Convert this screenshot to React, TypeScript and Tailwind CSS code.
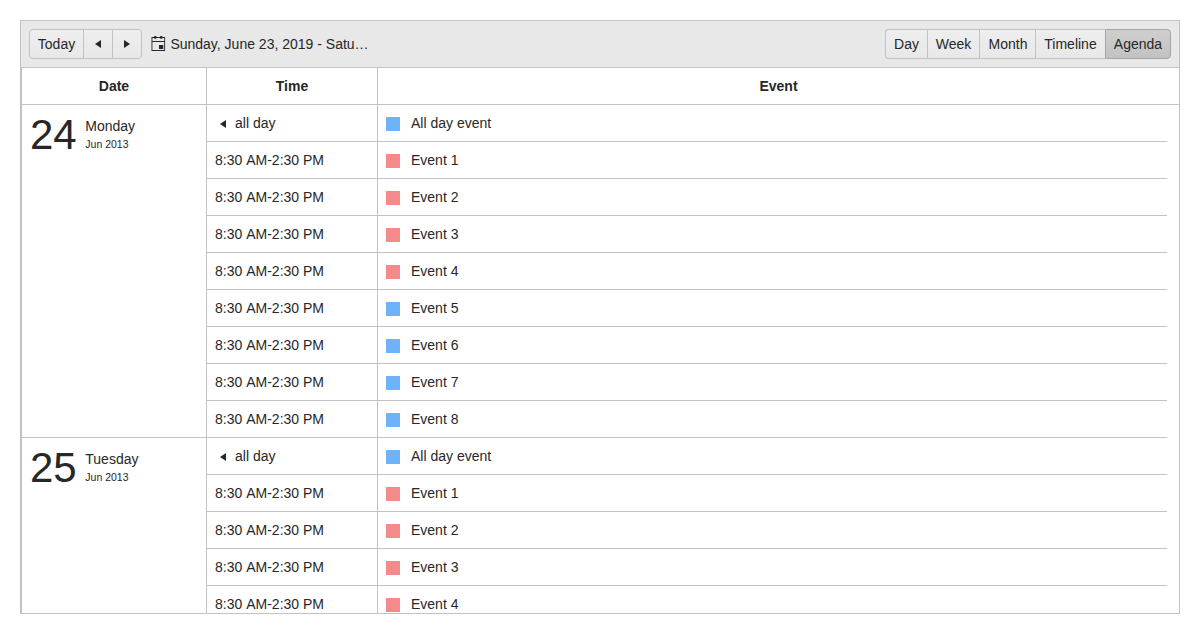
type Row = { time: [string, string]; title: string; blue: boolean; allDay?: boolean };

const buildRows = (count: number): Row[] => [
  { time: ['all ', 'day'], title: 'All day event', blue: true, allDay: true },
  ...Array.from({ length: count }, (_, i): Row => ({
    time: ['8:30 ', 'AM-2:30 PM'],
    title: `Event ${i + 1}`,
    blue: i >= 4,
  })),
];

const days = [
  { day: '24', weekday: 'Monday', month: 'Jun 2013', rows: buildRows(8) },
  { day: '25', weekday: 'Tuesday', month: 'Jun 2013', rows: buildRows(4) },
];

const views = [
  { label: 'Day', width: 'w-[42px] rounded-l' },
  { label: 'Week', width: 'w-[52px]' },
  { label: 'Month', width: 'w-[56px] pl-px' },
  { label: 'Timeline', width: 'w-[70px]' },
];

function ArrowLeft() {
  return (
    <svg width="6" height="8" viewBox="0 0 6 8" className="block shrink-0">
      <path d="M6 0v8L0 4z" fill="currentColor" />
    </svg>
  );
}

function ArrowRight() {
  return (
    <svg width="6" height="8" viewBox="0 0 6 8" className="block shrink-0">
      <path d="M0 0v8l6-4z" fill="currentColor" />
    </svg>
  );
}

function CalendarIcon() {
  return (
    <svg width="15" height="16" viewBox="0 0 15 16" className="block shrink-0">
      <path d="M0.5 1h13.6v14H0.5zM1.4 2v3h11.8V2zM1.4 6v8h11.8V6z" fill="currentColor" fillRule="evenodd" />
      <path d="M3.2 0.1h2.1v2.7H3.2zM9.2 0.1h2.1v2.7H9.2zM8 9h4.3v4H8z" fill="currentColor" />
    </svg>
  );
}

function Toolbar() {
  return (
    <div className="flex h-[47px] shrink-0 items-center border-b border-[#c2c2c2] bg-[#e8e8e8] px-2">
      <div className="flex h-[30px] overflow-hidden rounded border border-[#c2c2c2] bg-linear-to-b from-[#eeeeee] to-[#e8e8e8]">
        <button className="w-[53px] text-center">Today</button>
        <button className="flex w-[29px] items-center justify-center border-l border-[#c2c2c2]">
          <ArrowLeft />
        </button>
        <button className="flex w-[29px] items-center justify-center border-l border-[#c2c2c2]">
          <ArrowRight />
        </button>
      </div>
      <div className="ml-[9px] flex items-center gap-[4.4px]">
        <CalendarIcon />
        <span>Sunday, June 23, 2019 - Satu…</span>
      </div>
      <div className="ml-auto flex h-[30px]">
        {views.map((v) => (
          <button
            key={v.label}
            className={`${v.width} border-y border-l border-[#c2c2c2] bg-linear-to-b from-[#eeeeee] to-[#e8e8e8] text-center`}
          >
            {v.label}
          </button>
        ))}
        <button className="w-[66px] rounded-r border border-[#a5a5a5] bg-linear-to-b from-[#cfcfcf] to-[#c2c2c2] text-center">
          Agenda
        </button>
      </div>
    </div>
  );
}

export default function App() {
  return (
    <div className="h-[634px] overflow-hidden bg-white p-5 font-['Liberation_Sans',Arial,sans-serif] text-[14px] leading-5 text-[#272727]">
      <div className="flex h-[594px] flex-col overflow-hidden border border-[#c2c2c2]">
        <Toolbar />
        <div className="flex min-h-0 grow flex-col overflow-hidden border-l border-[#c2c2c2]">
          <div className="flex h-[37px] shrink-0 border-b border-[#c2c2c2] text-center leading-9 font-bold">
            <div className="w-[184px]">Date</div>
            <div className="w-[171px] border-l border-[#c2c2c2]">Time</div>
            <div className="grow border-l border-[#c2c2c2]">Event</div>
          </div>
          {days.map((d) => (
            <div key={d.day} className="flex shrink-0 pr-3">
              <div className="flex w-[184px] shrink-0 border-b border-[#c2c2c2] pl-2">
                <div className="w-[55.3px] pt-2 text-[42px] leading-[44px]">{d.day}</div>
                <div className="pt-[11px]">
                  <div>{d.weekday}</div>
                  <div className="text-[10.5px] leading-4">{d.month}</div>
                </div>
              </div>
              <div className="grow">
                {d.rows.map((r) => (
                  <div key={r.title} className="flex h-[37px] leading-5">
                    <div className="flex w-[171px] items-center border-b border-l border-[#c2c2c2] pl-2">
                      {r.allDay && (
                        <span className="mr-[9px] ml-[5px] pt-0.5">
                          <ArrowLeft />
                        </span>
                      )}
                      <span>
                        <span className={r.allDay ? '' : '[word-spacing:0.05px]'}>{r.time[0]}</span>
                        {r.time[1]}
                      </span>
                    </div>
                    <div className="flex grow items-center border-b border-l border-[#c2c2c2] pl-2">
                      <span className={`mt-[2px] mr-[11px] size-[14px] ${r.blue ? 'bg-[#6eb3fa]' : 'bg-[#f58a8a]'}`} />
                      <span>{r.title}</span>
                    </div>
                  </div>
                ))}
              </div>
            </div>
          ))}
        </div>
      </div>
    </div>
  );
}
